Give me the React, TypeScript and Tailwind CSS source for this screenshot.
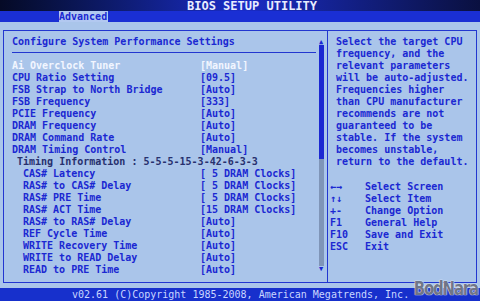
import React from "react";

type Row = { label: string; value?: string; level: 0 | 1 | 2; active?: boolean };

const rows: Row[] = [
  { label: "Ai Overclock Tuner", value: "[Manual]", level: 0, active: true },
  { label: "CPU Ratio Setting", value: "[09.5]", level: 0 },
  { label: "FSB Strap to North Bridge", value: "[Auto]", level: 0 },
  { label: "FSB Frequency", value: "[333]", level: 0 },
  { label: "PCIE Frequency", value: "[Auto]", level: 0 },
  { label: "DRAM Frequency", value: "[Auto]", level: 0 },
  { label: "DRAM Command Rate", value: "[Auto]", level: 0 },
  { label: "DRAM Timing Control", value: "[Manual]", level: 0 },
  { label: "Timing Information : 5-5-5-15-3-42-6-3-3", level: 1 },
  { label: "CAS# Latency", value: "[ 5 DRAM Clocks]", level: 2 },
  { label: "RAS# to CAS# Delay", value: "[ 5 DRAM Clocks]", level: 2 },
  { label: "RAS# PRE Time", value: "[ 5 DRAM Clocks]", level: 2 },
  { label: "RAS# ACT Time", value: "[15 DRAM Clocks]", level: 2 },
  { label: "RAS# to RAS# Delay", value: "[Auto]", level: 2 },
  { label: "REF Cycle Time", value: "[Auto]", level: 2 },
  { label: "WRITE Recovery Time", value: "[Auto]", level: 2 },
  { label: "WRITE to READ Delay", value: "[Auto]", level: 2 },
  { label: "READ to PRE Time", value: "[Auto]", level: 2 },
];

const help = [
  "Select the target CPU",
  "frequency, and the",
  "relevant parameters",
  "will be auto-adjusted.",
  "Frequencies higher",
  "than CPU manufacturer",
  "recommends are not",
  "guaranteed to be",
  "stable. If the system",
  "becomes unstable,",
  "return to the default.",
];

const keys: [string, string][] = [
  ["\u2190\u2192", "Select Screen"],
  ["\u2191\u2193", "Select Item"],
  ["+-", "Change Option"],
  ["F1", "General Help"],
  ["F10", "Save and Exit"],
  ["ESC", "Exit"],
];

const indent = ["pl-0", "pl-[5px]", "pl-[11px]"];

export default function App() {
  return (
    <div className="w-[480px] h-[301px] flex flex-col bg-[#aac5ea] font-['DejaVu_Sans_Mono',monospace] font-bold text-[10px] leading-[12px] text-[#1b28d2] overflow-hidden relative">
      <div className="h-[11px] flex items-center pl-[187px] bg-gradient-to-r from-[#050a26] via-[#1a2cc8] to-[#0a1040] text-[12px] text-[#e8ecff] whitespace-pre">
        BIOS SETUP UTILITY
      </div>

      <div className="h-[11px] flex bg-[#1a2fd4] pl-[59px]">
        <div className="w-[49px] bg-[#b2c8f0] text-[#1b28d2] leading-[11px] whitespace-pre">Advanced</div>
      </div>

      <div className="flex-1 px-[3px] pt-[8px] pb-[5px]">
        <div className="h-full flex border border-[#2236d0]">
          <div className="flex-1 flex">
            <div className="flex-1 pl-[8px] pt-[5px]">
              <div className="whitespace-pre">Configure System Performance Settings</div>
              <div className="h-px bg-[#2236d0] mt-[4px] mb-[7px] mr-[2px]" />
              {rows.map((r) => (
                <div
                  key={r.label}
                  className={`flex whitespace-pre ${
                    r.active ? "text-[#f2f6ff]" : r.level === 1 ? "text-[#27306e]" : ""
                  }`}
                >
                  <div className={`w-[188px] ${indent[r.level]}`}>{r.label}</div>
                  {r.value && <div>{r.value}</div>}
                </div>
              ))}
            </div>
            <div className="w-[6px] mr-[3px] flex flex-col items-center pt-[8px] pb-[10px]">
              <div className="text-[7px] leading-[6px]">▲</div>
              <div className="w-[5px] h-[114px] bg-[#1b28d2]" />
              <div className="w-[5px] flex-1 bg-[#7f95b8]" />
              <div className="text-[7px] leading-[6px]">▼</div>
            </div>
          </div>

          <div className="w-[149px] border-l border-[#2236d0] pt-[5px]">
            <div className="pl-[8px] whitespace-pre">
              {help.map((h) => (
                <div key={h}>{h}</div>
              ))}
            </div>
            <div className="mt-[13px] pl-[2px] whitespace-pre">
              {keys.map(([k, d]) => (
                <div key={k} className="flex">
                  <div className="w-[35px]">{k}</div>
                  <div>{d}</div>
                </div>
              ))}
            </div>
          </div>
        </div>
      </div>

      <div className="h-[13px] bg-[#1730cc] text-[#c9d6ff] pl-[72px] leading-[13px] whitespace-pre font-normal">
        v02.61 (C)Copyright 1985-2008, American Megatrends, Inc.
      </div>

      <div className="absolute right-[2px] bottom-[2px] text-[15px] leading-[16px] font-['DejaVu_Sans',sans-serif] font-bold tracking-[-1.2px] scale-y-125 origin-bottom text-[#6f7688] [text-shadow:0_0_1px_#ffffff,0_0_1px_#ffffff]">
        BodNara
      </div>
    </div>
  );
}
